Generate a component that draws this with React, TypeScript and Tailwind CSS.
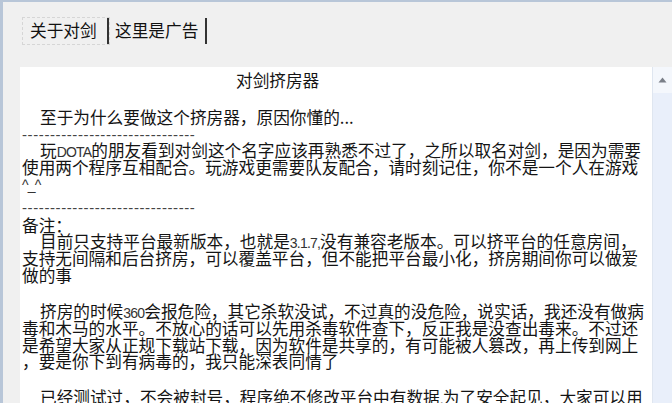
import type { ReactNode } from 'react';

const cjk = "font-['Noto_Sans_CJK_SC',sans-serif]";

const Lat = ({ children }: { children: ReactNode }) => (
    <span className="font-['Liberation_Sans',sans-serif] text-[14px] leading-none tracking-[-0.8px] text-[#333]">{children}</span>
);

const Dashes = () => (
    <span className="font-['Liberation_Sans',sans-serif] text-[15px] leading-none tracking-[0.6px] text-[#444]">
        {'-'.repeat(31)}
    </span>
);

interface Line {
    content: ReactNode;
    indent?: boolean;
    mt?: string;
}

const lines: Line[] = [
    { content: <>至于为什么要做这个挤房器，原因你懂的...</>, indent: true, mt: 'mt-[20px]' },
    { content: <Dashes /> },
    { content: <>玩<Lat>DOTA</Lat>的朋友看到对剑这个名字应该再熟悉不过了，之所以取名对剑，是因为需要</>, indent: true },
    { content: <>使用两个程序互相配合。玩游戏更需要队友配合，请时刻记住，你不是一个人在游戏</> },
    { content: <Lat>^_^</Lat> },
    { content: <Dashes />, mt: 'mt-[6px]' },
    { content: <>备注：</>, mt: 'mt-[2px]' },
    { content: <>目前只支持平台最新版本，也就是<Lat>3.1.7,</Lat>没有兼容老版本。可以挤平台的任意房间，</>, indent: true },
    { content: <>支持无间隔和后台挤房，可以覆盖平台，但不能把平台最小化，挤房期间你可以做爱</> },
    { content: <>做的事</> },
    { content: <>挤房的时候<Lat>360</Lat>会报危险，其它杀软没试，不过真的没危险，说实话，我还没有做病</>, indent: true, mt: 'mt-[20px]' },
    { content: <>毒和木马的水平。不放心的话可以先用杀毒软件查下，反正我是没查出毒来。不过还</> },
    { content: <>是希望大家从正规下载站下载，因为软件是共享的，有可能被人篡改，再上传到网上</> },
    { content: <>，要是你下到有病毒的，我只能深表同情了</> },
    { content: <>已经测试过，不会被封号，程序绝不修改平台中有数据<Lat>,</Lat>为了安全起见，大家可以用</>, indent: true, mt: 'mt-[19px]' },
];

export default function App() {
    return (
        <div className={`w-[672px] h-[403px] overflow-hidden bg-[#f0f0f0] flex flex-col border-t-2 border-l-[3px] border-[#b8c6d8] ${cjk}`}>
            {/* Tabs */}
            <div className="mt-[15px] ml-[19px] h-[31px] flex items-center text-[16.7px] text-[#111]">
                <div className="h-full flex items-center pl-[7px] border border-dashed border-[#d6d6d6]">
                    <span className="w-[77px]">关于对剑</span>
                    <div className="w-[2px] h-[26px] bg-[#333]" />
                </div>
                <div className="h-full flex items-center pl-[5px]">
                    <span className="w-[90px]">这里是广告</span>
                    <div className="w-[2px] h-[26px] bg-[#333]" />
                </div>
            </div>

            {/* Text box */}
            <div className="mt-[22px] ml-[17px] flex-1 flex">
                <div className="flex-1 bg-white pt-[5px] pl-[2px] text-[16.67px] leading-[16.67px] text-[#141414] whitespace-nowrap overflow-hidden">
                    <div className="h-[16.67px] pl-[214px]">对剑挤房器</div>
                    {lines.map((l, i) => (
                        <div key={i} className={`h-[16.67px] ${l.indent ? 'pl-[18px]' : ''} ${l.mt ?? ''}`}>
                            {l.content}
                        </div>
                    ))}
                </div>

                {/* Scrollbar */}
                <div className="w-[20px] flex flex-col bg-[#e9effa] border-l border-[#dfe6f0]">
                    <div className="h-[26px] flex items-center justify-center bg-[#f4f7fc]">
                        <svg width="9" height="6" viewBox="0 0 9 6">
                            <path d="M0.5 5.5 L4.5 0.5 L8.5 5.5 Z" fill="#7a7f88" />
                        </svg>
                    </div>
                </div>
            </div>
        </div>
    );
}
